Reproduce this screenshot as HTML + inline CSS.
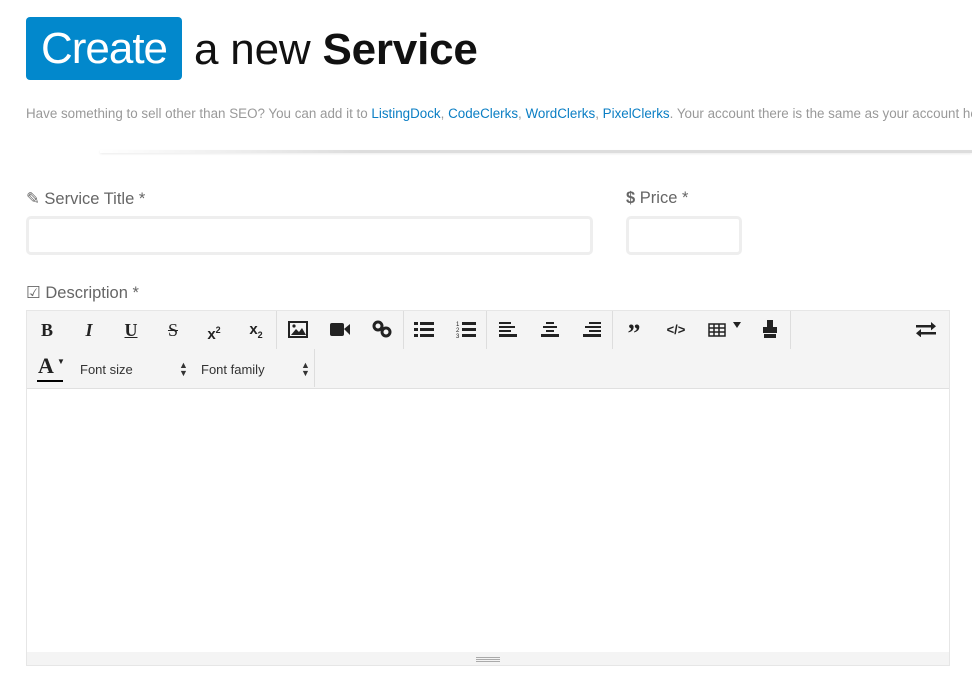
<!DOCTYPE html>
<html><head><meta charset="utf-8"><style>
body{margin:0;background:#fff;font-family:"Liberation Sans",sans-serif;width:972px;height:686px;overflow:hidden;position:relative}
.abs{position:absolute}
.create{left:26px;top:17px;width:156px;height:63px;background:#0288cc;border-radius:4px;color:#fff;font-size:44px;font-weight:300;line-height:63px;text-align:center;letter-spacing:-1px}
.h{left:194px;top:17px;line-height:66px;font-size:44px;color:#111;letter-spacing:-0.2px}
.sub{left:26px;top:106px;font-size:13.4px;color:#999;white-space:nowrap}
.sub a{color:#0a7ec4;text-decoration:none}
.rule{left:100px;top:150px;width:872px;height:3px;background:linear-gradient(90deg,rgba(0,0,0,0),#ddd 30%,#ddd);box-shadow:0 1px 2px rgba(0,0,0,.08)}
.lbl{font-size:16.5px;color:#666}
.inp{border:3px solid #eee;border-radius:5px;background:#fff;box-sizing:border-box}
.ed{left:26px;top:310px;width:924px;height:356px;border:1px solid #e6e6e6;box-sizing:border-box}
.tb{left:27px;top:311px;width:922px;height:77px;background:#f4f4f4;border-bottom:1px solid #e0e0e0}
.bt{position:absolute;top:311px;width:42px;height:38px;text-align:center;line-height:38px;color:#222;font-size:18px}
.sep{position:absolute;width:1px;background:#ddd}
.foot{left:27px;top:652px;width:922px;height:13px;background:#f4f4f4}
</style></head><body>
<div class="abs create">Create</div>
<div class="abs h"><span style="font-weight:300">a new</span> <b>Service</b></div>
<div class="abs sub">Have something to sell other than SEO? You can add it to <a>ListingDock</a>, <a>CodeClerks</a>, <a>WordClerks</a>, <a>PixelClerks</a>. Your account there is the same as your account here.</div>
<div class="abs rule"></div>

<div class="abs lbl" style="left:26px;top:189px">✎ Service Title *</div>
<div class="abs lbl" style="left:626px;top:189px"><b>$</b> Price *</div>
<div class="abs inp" style="left:26px;top:216px;width:567px;height:39px"></div>
<div class="abs inp" style="left:626px;top:216px;width:116px;height:39px"></div>
<div class="abs lbl" style="left:26px;top:283px">☑ Description *</div>

<div class="abs ed"></div>
<div class="abs tb"></div>
<div class="sep" style="left:276px;top:311px;height:38px"></div>
<div class="sep" style="left:403px;top:311px;height:38px"></div>
<div class="sep" style="left:486px;top:311px;height:38px"></div>
<div class="sep" style="left:612px;top:311px;height:38px"></div>
<div class="sep" style="left:790px;top:311px;height:38px"></div>
<div class="sep" style="left:314px;top:349px;height:38px"></div>

<div class="bt" style="left:26px;font-family:'Liberation Serif',serif;font-weight:bold">B</div>
<div class="bt" style="left:68px;font-family:'Liberation Serif',serif;font-style:italic;font-weight:bold">I</div>
<div class="bt" style="left:110px;font-family:'Liberation Serif',serif;text-decoration:underline;font-weight:bold">U</div>
<div class="bt" style="left:152px;font-family:'Liberation Serif',serif;text-decoration:line-through">S</div>
<div class="bt" style="left:193px;font-weight:bold;font-size:15px">x<sup style="font-size:9px">2</sup></div>
<div class="bt" style="left:235px;font-weight:bold;font-size:15px">x<sub style="font-size:9px">2</sub></div>
<svg class="abs" style="left:288px;top:321px" width="20" height="17"><rect x="1" y="1" width="18" height="15" fill="none" stroke="#222" stroke-width="2"/><path d="M3 14l5-6 3 3 3-4 4 7z" fill="#222"/><circle cx="6" cy="5" r="1.6" fill="#222"/></svg>
<svg class="abs" style="left:330px;top:322px" width="20" height="15"><rect x="0" y="1" width="14" height="13" rx="2" fill="#222"/><path d="M14 7l6-5v11z" fill="#222"/></svg>
<svg class="abs" style="left:372px;top:320px" width="20" height="18"><circle cx="6" cy="6" r="4" fill="none" stroke="#222" stroke-width="3"/><circle cx="14" cy="12" r="4" fill="none" stroke="#222" stroke-width="3"/></svg>
<svg class="abs" style="left:414px;top:322px" width="20" height="15"><g fill="#222"><rect x="0" y="0" width="4" height="3"/><rect x="0" y="6" width="4" height="3"/><rect x="0" y="12" width="4" height="3"/><rect x="6" y="0" width="14" height="3"/><rect x="6" y="6" width="14" height="3"/><rect x="6" y="12" width="14" height="3"/></g></svg>
<svg class="abs" style="left:456px;top:320px" width="20" height="18"><g fill="#222"><rect x="6" y="2" width="14" height="3"/><rect x="6" y="8" width="14" height="3"/><rect x="6" y="14" width="14" height="3"/><text x="0" y="6" font-size="6">1</text><text x="0" y="12" font-size="6">2</text><text x="0" y="18" font-size="6">3</text></g></svg>
<svg class="abs" style="left:499px;top:322px" width="20" height="15"><g fill="#222"><rect x="0" y="0" width="12" height="2"/><rect x="0" y="4" width="16" height="2"/><rect x="0" y="8" width="12" height="2"/><rect x="0" y="12" width="18" height="3"/></g></svg>
<svg class="abs" style="left:541px;top:322px" width="20" height="15"><g fill="#222"><rect x="5" y="0" width="8" height="2"/><rect x="2" y="4" width="14" height="2"/><rect x="5" y="8" width="8" height="2"/><rect x="0" y="12" width="18" height="3"/></g></svg>
<svg class="abs" style="left:583px;top:322px" width="20" height="15"><g fill="#222"><rect x="6" y="0" width="12" height="2"/><rect x="2" y="4" width="16" height="2"/><rect x="6" y="8" width="12" height="2"/><rect x="0" y="12" width="18" height="3"/></g></svg>
<div class="bt" style="left:613px;font-weight:bold;font-size:26px;line-height:46px;font-family:'Liberation Serif',serif">”</div>
<div class="bt" style="left:655px;font-weight:bold;font-size:13px">&lt;/&gt;</div>
<svg class="abs" style="left:708px;top:322px" width="36" height="15"><g fill="none" stroke="#222" stroke-width="1.5"><rect x="1" y="2" width="16" height="12"/><path d="M1 6h16M1 10h16M6 2v12M11 2v12"/></g><path d="M25 0h8l-4 6z" fill="#222"/></svg>
<svg class="abs" style="left:763px;top:320px" width="14" height="18"><path d="M4 0h6v7h4v6H0V7h4z" fill="#222"/><rect x="1" y="14" width="12" height="4" fill="#222"/></svg>
<svg class="abs" style="left:916px;top:322px" width="20" height="15"><g fill="#222"><rect x="0" y="3" width="16" height="2.5"/><path d="M15 0l5 4.2-5 4.2z"/><rect x="4" y="10" width="16" height="2.5"/><path d="M5 7l-5 4.2 5 4.2z"/></g></svg>

<div class="abs" style="left:38px;top:353px;font-family:'Liberation Serif',serif;font-weight:bold;font-size:22px;color:#222">A</div>
<div class="abs" style="left:57px;top:357px;font-size:8px;color:#222">▼</div>
<div class="abs" style="left:37px;top:380px;width:26px;height:2px;background:#000"></div>
<div class="abs" style="left:80px;top:362px;font-size:13px;color:#333">Font size</div>
<div class="abs" style="left:179px;top:361px;font-size:9px;line-height:8px;color:#333">▲<br>▼</div>
<div class="abs" style="left:201px;top:362px;font-size:13px;color:#333">Font family</div>
<div class="abs" style="left:301px;top:361px;font-size:9px;line-height:8px;color:#333">▲<br>▼</div>

<div class="abs foot"></div>
<div class="abs" style="left:476px;top:657px;width:24px;height:1px;border-top:1px solid #aaa;border-bottom:1px solid #aaa"></div>
<div class="abs" style="left:476px;top:661px;width:24px;height:1px;background:#aaa"></div>
</body></html>
